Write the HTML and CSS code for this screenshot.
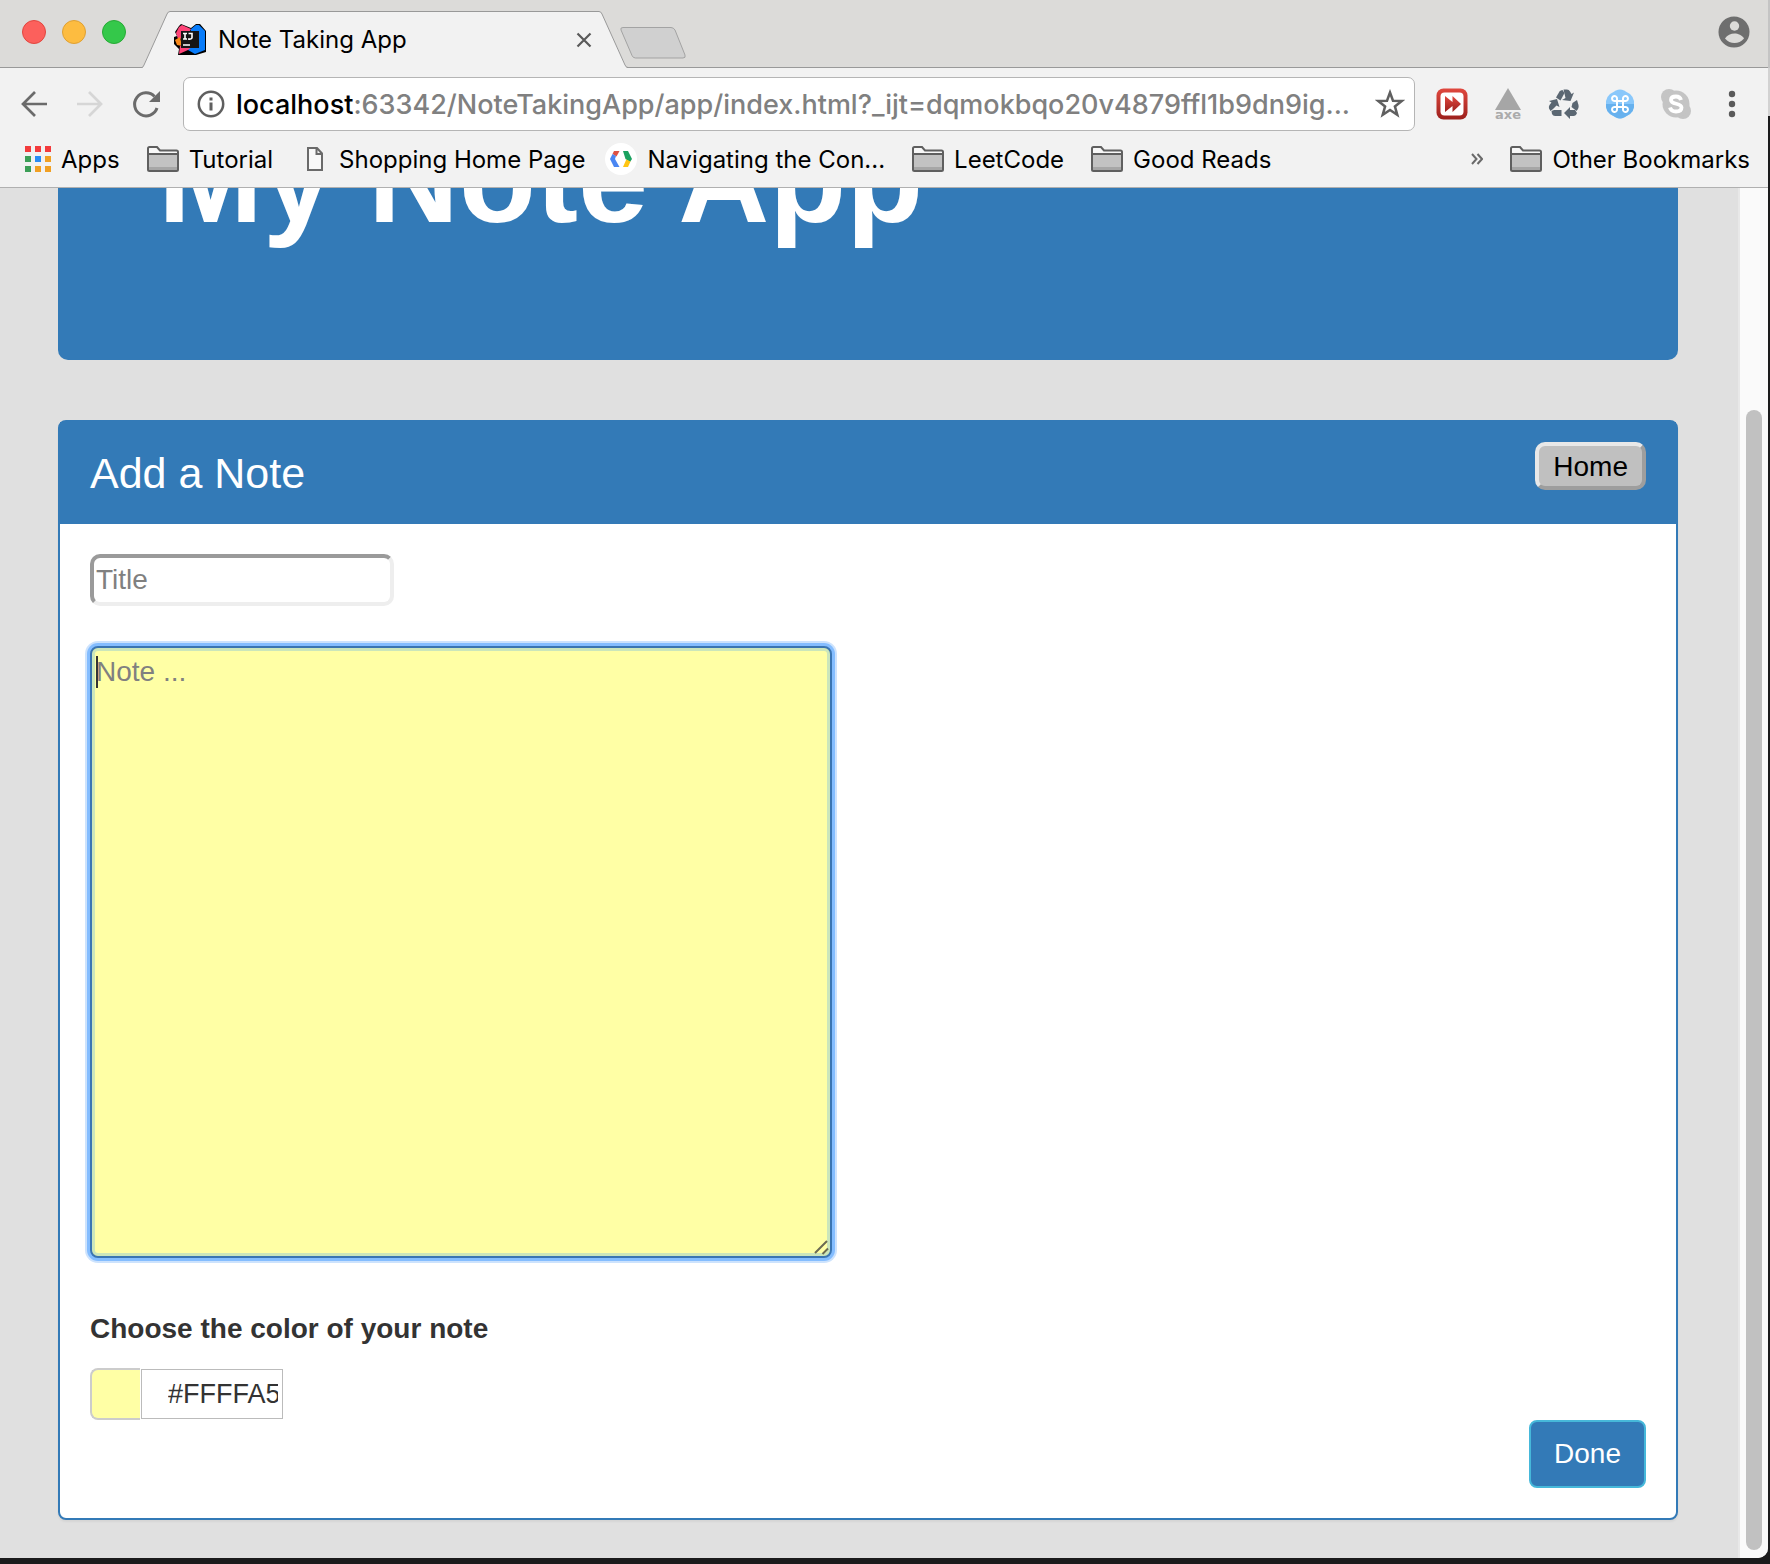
FILE: index.html
```html
<!DOCTYPE html>
<html lang="en">
<head>
<meta charset="utf-8">
<title>Note Taking App</title>
<link rel="stylesheet" href="styles.css">
</head>
<body>
<svg class="defs" aria-hidden="true">
  <symbol id="folder" viewBox="0 0 32 26">
    <path d="M1 24V2.500Q1 1 2.500 1H10L13 4.500H29.500Q31 4.500 31 6V23.500Q31 25 29.500 25H2.500Q1 25 1 23.500Z" fill="#f8f8f8"/>
    <path d="M1 8H31V25H1Z" fill="#c2c2c2"/>
    <path d="M2 21H30V25H2Z" fill="#a6a6a6"/>
    <path d="M1 8H31M1 23.500V2.500Q1 1 2.500 1H10L13 4.500H29.500Q31 4.500 31 6V23.500Q31 25 29.500 25H2.500Q1 25 1 23.500Z" fill="none" stroke="#5f5f5f" stroke-width="2"/>
  </symbol>
</svg>
<div class="window">
  <header class="chrome">
    <div class="tabstrip">
      <div class="lights">
        <button class="light red" aria-label="Close window"></button>
        <button class="light amber" aria-label="Minimize window"></button>
        <button class="light green" aria-label="Zoom window"></button>
      </div>
      <div class="tab">
        <svg class="tab-shape" width="486" height="57" viewBox="0 0 486 57" aria-hidden="true"><path d="M0 57L1 55.500L25 3Q26 .5 28 .5H457Q459 .5 460 3L484 55.500L485 57Z" fill="#f2f2f2"/><path d="M0 56.500Q1 56.500 2 54L25 3Q26 .5 28 .5H457Q459 .5 460 3L483 54Q484 56.500 486 56.500" fill="none" stroke="#999" stroke-width="1"/></svg>
        <svg class="favicon" width="32" height="32" viewBox="0 0 32 32" aria-hidden="true">
          <path d="M5 2L7 0L17 4L22 0H26L32 7V28L22 31H4L5 25L0 20V13L3 12L1 8Z" fill="#000"/>
          <path d="M5 3L8 1L17 5L12 14L4 15L2 9Z" fill="#fe4377"/>
          <path d="M17 5L22 1H25L31 7V26L21 30L14 26Z" fill="#087cfa"/>
          <path d="M1 16L6 13L8 22L3 21Z" fill="#f98a1c"/>
          <path d="M6 22H19L14 26L5 30Z" fill="#fe4377"/>
          <path d="M7 7H25V24H7Z" fill="#151515"/>
          <path d="M9 9.500H13M11 9V15M9 15H13M14.500 9.500H18V13.500Q18 15.500 14 15M9 21H16" stroke="#fff" stroke-width="1.600" fill="none"/>
        </svg>
        <span class="tab-title">Note Taking App</span>
        <button class="icon-btn tab-close" aria-label="Close tab"><svg width="16" height="16" viewBox="0 0 16 16"><path d="M1.500 1.500L14.500 14.500M14.500 1.500L1.500 14.500" stroke="#5a5a5a" stroke-width="2.200"/></svg></button>
      </div>
      <button class="icon-btn new-tab" aria-label="New tab"><svg width="66" height="32" viewBox="0 0 66 32"><path d="M3 .5H51Q53.500.5 55 3L65 28Q66 31 63 31H15.500Q13 31 12 28.500L1 3Q0 .5 3 .5Z" fill="#d0d0d0" stroke="#a3a3a3"/></svg></button>
      <button class="icon-btn profile" aria-label="Profile"><svg width="32" height="32" viewBox="0 0 32 32"><circle cx="16" cy="16" r="15.500" fill="#6e6e6e"/><circle cx="16.500" cy="10" r="4.700" fill="#dcdbd9"/><path d="M7 22.500C9 19 13 17.500 16.500 17.500S24 19 26 22.500C23.500 25.500 20 27 16.500 27S9.500 25.500 7 22.500Z" fill="#dcdbd9"/></svg></button>
    </div>

    <div class="toolbar">
      <nav class="tools" aria-label="History">
        <button class="icon-btn" aria-label="Back"><svg width="32" height="32" viewBox="0 0 32 32"><path d="M29 16H5M17 4L5 16L17 28" fill="none" stroke="#6b6b6b" stroke-width="2.700"/></svg></button>
        <button class="icon-btn" aria-label="Forward"><svg width="32" height="32" viewBox="0 0 32 32"><path d="M3 16H27M15 4L27 16L15 28" fill="none" stroke="#d6d6d6" stroke-width="2.700"/></svg></button>
        <button class="icon-btn" aria-label="Reload"><svg width="32" height="32" viewBox="0 0 32 32"><path d="M24.500 8.500A11.500 11.500 0 1 0 27 20" fill="none" stroke="#6b6b6b" stroke-width="3"/><path d="M30 3V14H19Z" fill="#6b6b6b"/></svg></button>
      </nav>
      <div class="address">
        <svg width="28" height="28" viewBox="0 0 28 28" aria-hidden="true"><circle cx="14" cy="14" r="12.200" fill="none" stroke="#5f5f5f" stroke-width="2.500"/><path d="M14 12.500V20.500M14 7.500V10.500" stroke="#5f5f5f" stroke-width="3"/></svg>
        <span class="url"><span class="host">localhost</span>:63342/NoteTakingApp/app/index.html?_ijt=dqmokbqo20v4879ffl1b9dn9ig...</span>
        <button class="icon-btn" aria-label="Bookmark this page"><svg width="30" height="30" viewBox="0 0 30 30"><path d="M15 3.500L18 11.700L26.700 12L19.900 17.400L22.300 25.800L15 20.900L7.700 25.800L10.100 17.400L3.300 12L12 11.700Z" fill="none" stroke="#5f5f5f" stroke-width="2.500"/></svg></button>
      </div>
      <div class="tools">
        <button class="icon-btn" aria-label="Fast forward"><svg width="32" height="32" viewBox="0 0 32 32"><defs><linearGradient id="rg" x2="0" y2="1"><stop stop-color="#e0483e"/><stop offset="1" stop-color="#9c201c"/></linearGradient></defs><rect x=".5" y=".5" width="31" height="31" rx="7" fill="url(#rg)"/><rect x="4.500" y="4.500" width="23" height="23" rx="4" fill="#fff"/><path d="M9 8L16.500 14V8L25 16L16.500 24V18L9 24Z" fill="url(#rg)"/></svg></button>
        <button class="icon-btn axe" aria-label="axe"><svg width="26" height="22" viewBox="0 0 26 22"><path d="M13 0L26 22H0Z" fill="#a6a6a6"/></svg><span>axe</span></button>
        <button class="icon-btn" aria-label="Recycle"><svg width="32" height="32" viewBox="0 0 32 32"><g fill="#5b6772"><path d="M8 9.500L11.500 3.500Q12.500 2 14.500 2L16.500 5L12.500 12.500Z"/><path d="M15.500 1.500H19Q21 1.500 22 3.500L23.500 6L26 4.500L22.500 13L14 12L17.500 10Z"/><path d="M24.500 15L29 12L30.500 17Q31 19 30 21L28.500 23L23.500 19Z"/><path d="M29 25Q28 28 25.500 28H22V31L16 25L22 19V22H27Z"/><path d="M13.500 22V28H7Q5 28 4 26L3.500 23L6 22Z"/><path d="M2.500 23L1 20.500Q.5 18.500 1.500 17L3.500 14.500L1 13L9 11L11.500 19L8.500 17.500L5 21Z"/></g></svg></button>
        <button class="icon-btn" aria-label="Shortcuts"><svg width="32" height="32" viewBox="0 0 32 32"><path d="M12 2.500Q16 .5 20 2.500L26 6Q29.500 9 30 13V19Q29.500 23 26 26L20 29.500Q16 31.500 12 29.500L6 26Q2.500 23 2 19V13Q2.500 9 6 6Z" fill="#8ac8fb"/><path d="M2 16H30V19Q29.500 23 26 26L20 29.500Q16 31.500 12 29.500L6 26Q2.500 23 2 19Z" fill="#67b1ee"/><path d="M13 13H19V19H13ZM13 13H11A2.500 2.500 0 1 1 13 11ZM19 13V11A2.500 2.500 0 1 1 21 13ZM19 19H21A2.500 2.500 0 1 1 19 21ZM13 19V21A2.500 2.500 0 1 1 11 19Z" fill="none" stroke="#fff" stroke-width="2"/></svg></button>
        <button class="icon-btn" aria-label="Skype"><svg width="32" height="32" viewBox="0 0 32 32"><circle cx="9" cy="9" r="8" fill="#c4c4c4"/><circle cx="23" cy="23" r="8" fill="#c4c4c4"/><circle cx="16" cy="16" r="13.500" fill="#c4c4c4"/><path d="M21 12Q20 8.500 16 8.500Q11 8.500 11 12C11 17 21.500 14.500 21.500 19.500Q21.500 23.500 16 23.500Q11 23.500 10 19.500" fill="none" stroke="#fff" stroke-width="3.800"/></svg></button>
        <button class="icon-btn" aria-label="Menu"><svg width="32" height="32" viewBox="0 0 32 32"><g fill="#5a5a5a"><circle cx="16" cy="6" r="3.200"/><circle cx="16" cy="16" r="3.200"/><circle cx="16" cy="26" r="3.200"/></g></svg></button>
      </div>
    </div>

    <nav class="bookmarks" aria-label="Bookmarks">
      <a class="bm apps" href="#"><svg width="26" height="26" viewBox="0 0 26 26" aria-hidden="true"><path d="M0 0H6V6H0ZM10 0H16V6H10ZM20 0H26V6H20Z" fill="#f33b3c"/><path d="M0 10H6V16H0ZM0 20H6V26H0Z" fill="#3c9f57"/><path d="M10 10H16V16H10Z" fill="#2a8cf4"/><path d="M20 10H26V16H20ZM10 20H16V26H10ZM20 20H26V26H20Z" fill="#f1a023"/></svg>Apps</a>
      <a class="bm" href="#"><svg width="32" height="26" aria-hidden="true"><use href="#folder"/></svg>Tutorial</a>
      <a class="bm page-link" href="#"><svg width="16" height="24" viewBox="0 0 16 24" aria-hidden="true"><path d="M1 1H10L15 6.500V23H1ZM9.500 1V7H15" fill="#f8f8f8" stroke="#6a6a6a" stroke-width="2"/></svg>Shopping Home Page</a>
      <a class="bm" href="#"><svg width="32" height="32" viewBox="0 0 32 32" aria-hidden="true"><circle cx="16" cy="16" r="16" fill="#fff"/><path d="M9 8H14.500L11.500 13.500L7.500 11Z" fill="#dd5144"/><path d="M7.500 11L11 13L10 16L14.500 24H9L5 16Z" fill="#4a86f2"/><path d="M18 8H23L27 16L25 19L20.500 16Z" fill="#1aa15f"/><path d="M20.500 16L25.500 18.500L23 24H18L21.500 16Z" fill="#ffc514"/></svg>Navigating the Con...</a>
      <a class="bm" href="#"><svg width="32" height="26" aria-hidden="true"><use href="#folder"/></svg>LeetCode</a>
      <a class="bm" href="#"><svg width="32" height="26" aria-hidden="true"><use href="#folder"/></svg>Good Reads</a>
      <button class="icon-btn more" aria-label="More bookmarks"><svg width="12" height="12" viewBox="0 0 12 12"><path d="M1 1L5.500 6L1 11M6.500 1L11 6L6.500 11" fill="none" stroke="#6a6a6a" stroke-width="2"/></svg></button>
      <a class="bm" href="#"><svg width="32" height="26" aria-hidden="true"><use href="#folder"/></svg>Other Bookmarks</a>
    </nav>
  </header>

  <div class="viewport">
    <main class="page">
      <div class="hero"><h1>My Note App</h1></div>
      <section class="panel">
        <div class="panel-head">
          <h2>Add a Note</h2>
          <button class="home">Home</button>
        </div>
        <form class="panel-body">
          <input class="title" type="text" placeholder="Title" aria-label="Title">
          <div class="note-wrap">
            <textarea class="note" placeholder="Note ..." aria-label="Note"></textarea>
            <svg class="grip" width="16" height="16" viewBox="0 0 16 16" aria-hidden="true"><path d="M1 13L13 1M8.500 14L14 8.500" stroke="#6b6b52" stroke-width="2"/></svg>
          </div>
          <label class="color-label" for="color">Choose the color of your note</label>
          <div class="picker"><span class="swatch"></span><input class="color" id="color" type="text" value="#FFFFA5"></div>
          <button class="done" type="button">Done</button>
        </form>
      </section>
    </main>
    <div class="scrollbar"><div class="thumb"></div></div>
  </div>
</div>
</body>
</html>
```
FILE: styles.css
```css
* { box-sizing: border-box; }

body {
  margin: 0;
  min-height: 100vh;
  display: flex;
  padding: 0 2px 6px 0;
  background: linear-gradient(#c4c4c4 0 68px, #d2d2d2 68px 116px, #1b1b1c 116px);
  font-family: "Liberation Sans", Arial, sans-serif;
  font-size: 28px;
  color: #333;
}

.defs { position: absolute; width: 0; height: 0; }

button, input, textarea { font: inherit; color: inherit; }

.icon-btn {
  display: flex;
  padding: 0;
  border: 0;
  background: none;
}

.window {
  flex: 1;
  min-width: 0;
  display: flex;
  flex-direction: column;
  overflow: hidden;
  border-radius: 0 0 10px 0;
  background: #e0e0e0;
}

/* Browser frame */
.chrome {
  font-family: Inter, "Liberation Sans", sans-serif;
  font-size: 24px;
  color: #000;
  background: #f2f2f2;
  border-bottom: 1px solid #b0b0b0;
}

.tabstrip {
  display: flex;
  height: 68px;
  background: #dcdbd9;
  border-bottom: 1px solid #999;
}

.lights {
  display: flex;
  gap: 16px;
  padding: 20px 16px 0 22px;
}

.light {
  width: 24px;
  height: 24px;
  padding: 0;
  border: 1px solid;
  border-radius: 50%;
}

.red { background: #fc605c; border-color: #e2463f; }
.amber { background: #fdbc40; border-color: #dfa033; }
.green { background: #34c84a; border-color: #27aa35; }

.tab {
  position: relative;
  display: flex;
  align-items: center;
  width: 486px;
  height: 57px;
  margin-top: 11px;
  padding: 0 36px 0 32px;
}

.tab-shape { position: absolute; left: 0; top: 0; }
.favicon, .tab-title, .tab-close { position: relative; }
.tab-title { flex: 1; margin-left: 12px; }

.new-tab { margin: 27px 0 0 -8px; align-self: flex-start; }
.profile { margin: 16px 18px 0 auto; align-self: flex-start; }

.toolbar {
  display: flex;
  align-items: center;
  gap: 21px;
  padding: 9px 20px 0 18px;
}

.tools { display: flex; gap: 24px; }

.address {
  flex: 1;
  min-width: 0;
  display: flex;
  align-items: center;
  height: 54px;
  padding: 0 9px 0 13px;
  border: 1px solid #b5b5b5;
  border-radius: 7px;
  background: #fff;
}

.url {
  flex: 1;
  margin-left: 11px;
  padding-top: 1px;
  overflow: hidden;
  white-space: nowrap;
  font-size: 27px;
  font-weight: 500;
  color: #808080;
}

.host { color: #000; }

.axe {
  flex-direction: column;
  align-items: center;
  width: 32px;
  height: 32px;
  font: bold 13px/10px "DejaVu Sans", sans-serif;
  color: #ababab;
}

.axe svg { flex: none; }

.bookmarks {
  display: flex;
  align-items: center;
  gap: 27px;
  height: 56px;
  padding: 0 18px 0 25px;
}

.bm {
  display: flex;
  align-items: center;
  gap: 10px;
  color: inherit;
  text-decoration: none;
  white-space: nowrap;
}

.page-link { gap: 16px; margin: 0 -7px 0 7px; }
.more { margin-left: auto; }

/* Page */
.viewport {
  flex: 1;
  display: flex;
}

.page {
  flex: 1;
  min-width: 0;
  overflow: hidden;
  padding: 0 60px 38px 58px;
}

.hero {
  margin: -175px 0 60px;
  padding: 96px 100px 112px;
  border-radius: 10px;
  background: #337ab7;
  color: #fff;
}

h1 {
  margin: 0;
  font-size: 126px;
  line-height: 139px;
}

.panel {
  border: 2px solid #337ab7;
  border-radius: 8px;
  background: #fff;
  box-shadow: 0 2px 2px rgba(0, 0, 0, .05);
}

.panel-head {
  display: flex;
  justify-content: space-between;
  align-items: flex-start;
  height: 102px;
  padding: 20px 30px;
  background: #337ab7;
  color: #fff;
}

h2 {
  margin: 7px 0 0;
  font-size: 43px;
  font-weight: 400;
  line-height: 48px;
}

.home {
  height: 48px;
  padding: 2px 14px 0;
  border: 4px solid;
  border-color: #e8e8e8 #9e9e9e #9e9e9e #e8e8e8;
  border-radius: 10px;
  background: #c0c0c0;
  color: #000;
  line-height: 38px;
}

.panel-body {
  display: flex;
  flex-direction: column;
  align-items: flex-start;
  padding: 30px;
}

::placeholder { color: #808080; opacity: 1; }

.title {
  width: 304px;
  height: 52px;
  padding: 0 2px;
  border: 4px solid;
  border-color: #9a9a9a #eee #eee #9a9a9a;
  border-radius: 10px;
}

.note-wrap {
  position: relative;
  display: flex;
  width: 742px;
  max-width: 100%;
  margin: 40px 0 51px;
}

/* The first background layer is the text cursor. */
.note {
  flex: 1;
  height: 612px;
  padding: 8px 4px;
  border: 2px solid #3a75b2;
  border-radius: 8px;
  outline: 0;
  resize: none;
  line-height: 32px;
  background: linear-gradient(#333, #333) 4px 8px / 2px 32px no-repeat, #ffffa5;
  box-shadow: inset 0 0 0 3px #cbe6bb, 0 0 0 3px #84bdff, 0 0 0 5px #cde3fd;
}

.grip { position: absolute; right: 2px; bottom: 2px; }

.color-label {
  font-weight: 700;
  line-height: 40px;
  margin-bottom: 19px;
}

.picker {
  display: flex;
  align-items: center;
  gap: 1px;
}

.swatch {
  width: 50px;
  height: 52px;
  border: 2px solid #ccc;
  border-right: 0;
  border-radius: 8px 0 0 8px;
  background: #ffffa5;
}

.color {
  width: 142px;
  height: 50px;
  padding: 0 4px 0 26px;
  border: 1px solid #bbb;
  border-radius: 0;
  font-size: 27px;
}

.done {
  align-self: flex-end;
  height: 68px;
  padding: 0 23px;
  border: 2px solid #46b8da;
  border-radius: 8px;
  background: #337ab7;
  color: #fff;
}

.scrollbar {
  display: flex;
  width: 30px;
  padding: 222px 6px 8px;
  border-left: 2px solid #e8e8e8;
  background: #fafafa;
}

.thumb {
  flex: 1;
  border-radius: 8px;
  background: #c1c1c1;
}
```
